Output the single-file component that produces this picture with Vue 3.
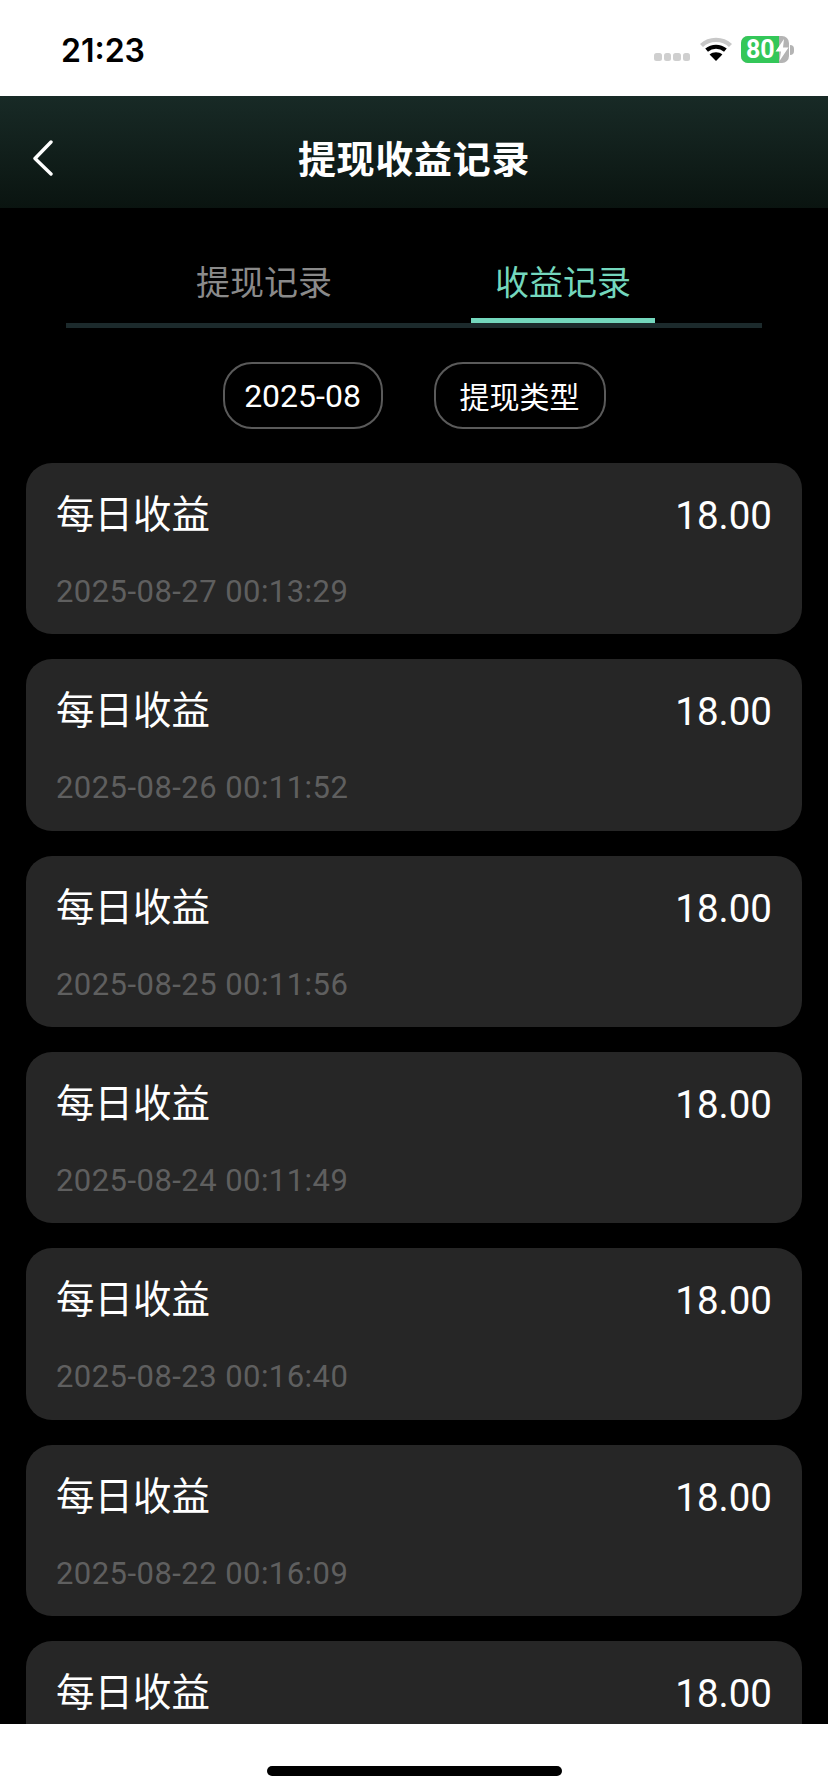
<script setup>
const dates = [
  '2025-08-27 00:13:29',
  '2025-08-26 00:11:52',
  '2025-08-25 00:11:56',
  '2025-08-24 00:11:49',
  '2025-08-23 00:16:40',
  '2025-08-22 00:16:09',
  '2025-08-21 00:15:33'
]
</script>

<template>
  <div class="page">
    <div class="status">
      <span class="time">21:23</span>
      <div class="status-right">
        <div class="dots"><i></i><i></i><i></i><i></i></div>
        <svg class="wifi" width="32" height="24" viewBox="0 0 32 24">
          <path d="M1.5 8.5C9.5 1 22.5 1 30.5 8.5" fill="none" stroke="#c8c8c8" stroke-width="4.4" />
          <path d="M6.6 13.2C12 8.6 20 8.6 25.4 13.2" fill="none" stroke="#000" stroke-width="4.2" />
          <path d="M16 24L9.6 17.4C13 14.4 19 14.4 22.4 17.4Z" fill="#000" />
        </svg>
        <div class="battery">
          <div class="battery-body">
            <div class="battery-fill"></div>
            <span class="battery-text">80</span>
            <svg class="bolt" width="14" height="22" viewBox="0 0 14 22">
              <path d="M9 0L0.5 12.5H6L4.5 22L13.5 8.5H8Z" fill="#fff" />
            </svg>
          </div>
          <div class="battery-cap"></div>
        </div>
      </div>
    </div>

    <div class="nav">
      <svg class="back" width="24" height="36" viewBox="0 0 24 36">
        <path d="M20 2L4 18.5L20 34" fill="none" stroke="#fff" stroke-width="3.4" stroke-linecap="round" stroke-linejoin="round" />
      </svg>
      <h1 class="nav-title">提现收益记录</h1>
    </div>

    <div class="content">
      <div class="tabs">
        <div class="tab">提现记录</div>
        <div class="tab active">收益记录</div>
      </div>

      <div class="filters">
        <div class="pill pill-date">2025-08</div>
        <div class="pill pill-type">提现类型</div>
      </div>

      <div class="list">
        <div v-for="d in dates" :key="d" class="card">
          <div class="row">
            <span class="label">每日收益</span>
            <span class="amount">18.00</span>
          </div>
          <div class="date">{{ d }}</div>
        </div>
      </div>
    </div>

    <div class="home"><div class="home-bar"></div></div>
  </div>
</template>

<style>
html, body { margin: 0; background: #fff; }
</style>

<style scoped>
.page {
  width: 828px;
  height: 1792px;
  display: flex;
  flex-direction: column;
  overflow: hidden;
  background: #000;
  font-family: "Noto Sans CJK SC", "Noto Sans", sans-serif;
}
.status {
  height: 96px;
  flex: none;
  background: #fff;
  display: flex;
  justify-content: space-between;
  align-items: flex-start;
  box-sizing: border-box;
  padding: 32px 34px 0 61px;
}
.time {
  font-family: Inter, Roboto, sans-serif;
  font-weight: 600;
  font-size: 32px;
  line-height: 38px;
  color: #000;
}
.status-right {
  display: flex;
  align-items: flex-start;
  padding-top: 4px;
}
.dots {
  display: flex;
  gap: 2px;
  margin-top: 17px;
  margin-right: 10px;
}
.dots i {
  width: 7.5px;
  height: 8px;
  border-radius: 2.5px;
  background: #cfcfcf;
}
.wifi { margin-right: 9px; margin-top: 1px; }
.battery { display: flex; align-items: center; }
.battery-body {
  width: 48px;
  height: 27px;
  border-radius: 7px;
  background: #b4b4b4;
  position: relative;
  overflow: hidden;
  display: flex;
  align-items: center;
}
.battery-fill {
  position: absolute;
  left: 0;
  top: 0;
  bottom: 0;
  width: 38px;
  background: #34c759;
}
.battery-text {
  position: relative;
  margin-left: 5px;
  color: #fff;
  font-family: Roboto, sans-serif;
  font-weight: 700;
  font-size: 25px;
  line-height: 27px;
}
.bolt { position: relative; margin-left: 0; }
.battery-cap {
  width: 4px;
  height: 10px;
  margin-left: 1px;
  background: #b4b4b4;
  border-radius: 0 4px 4px 0;
}
.nav {
  height: 112px;
  flex: none;
  background: linear-gradient(180deg, #182a26 0%, #0a1410 100%);
  display: flex;
  align-items: center;
  justify-content: center;
  position: relative;
}
.back {
  position: absolute;
  left: 31px;
  top: 44px;
}
.nav-title {
  margin: 10px 0 0;
  color: #fff;
  font-size: 38px;
  font-weight: 700;
  line-height: 50px;
  letter-spacing: 0.7px;
}
.content {
  flex: 1;
  min-height: 0;
  overflow: hidden;
  display: flex;
  flex-direction: column;
}
.tabs {
  margin: 0 66px;
  height: 120px;
  box-sizing: border-box;
  border-bottom: 5px solid #1c2a2c;
  display: flex;
  justify-content: flex-start;
  padding-left: 106px;
  flex: none;
}
.tab {
  width: 184px;
  margin-right: 115px;
  flex: none;
  box-sizing: border-box;
  height: 115px;
  padding-top: 48px;
  text-align: center;
  color: #8a8a8a;
  font-size: 34px;
  line-height: 50px;
}
.tab:last-child { margin-right: 0; }
.tab.active {
  color: #74d7bd;
  border-bottom: 5px solid #74d7bd;
}
.filters {
  flex: none;
  margin-top: 34px;
  display: flex;
  justify-content: center;
  gap: 51px;
}
.pill {
  height: 67px;
  box-sizing: border-box;
  border: 2px solid #5a5a5a;
  border-radius: 29px;
  display: flex;
  align-items: center;
  justify-content: center;
  color: #fff;
  font-size: 30px;
  line-height: 40px;
}
.pill-date {
  width: 160px;
  font-family: Roboto, sans-serif;
  font-size: 32px;
}
.pill-type { width: 172px; padding-bottom: 2px; }
.list {
  margin-top: 34px;
  padding: 0 26px;
  display: flex;
  flex-direction: column;
  gap: 25px;
}
.card {
  flex: none;
  height: 171.33px;
  box-sizing: border-box;
  background: #262626;
  border-radius: 26px;
  padding: 23px 30px 0 30px;
}
.row {
  display: flex;
  justify-content: space-between;
  align-items: flex-start;
  height: 50px;
}
.label {
  color: #fff;
  font-size: 38.5px;
  line-height: 50px;
}
.amount {
  color: #fff;
  font-family: Roboto, sans-serif;
  font-size: 38.5px;
  line-height: 50px;
  margin-top: 5px;
}
.date {
  margin-top: 36px;
  color: #5f5f5f;
  font-family: Roboto, sans-serif;
  font-size: 31px;
  letter-spacing: 0.45px;
  line-height: 40px;
  white-space: nowrap;
}
.home {
  height: 68px;
  flex: none;
  background: #fff;
  display: flex;
  justify-content: center;
  padding-top: 42px;
  box-sizing: border-box;
}
.home-bar {
  width: 295px;
  height: 10px;
  border-radius: 5px;
  background: #000;
}
</style>
